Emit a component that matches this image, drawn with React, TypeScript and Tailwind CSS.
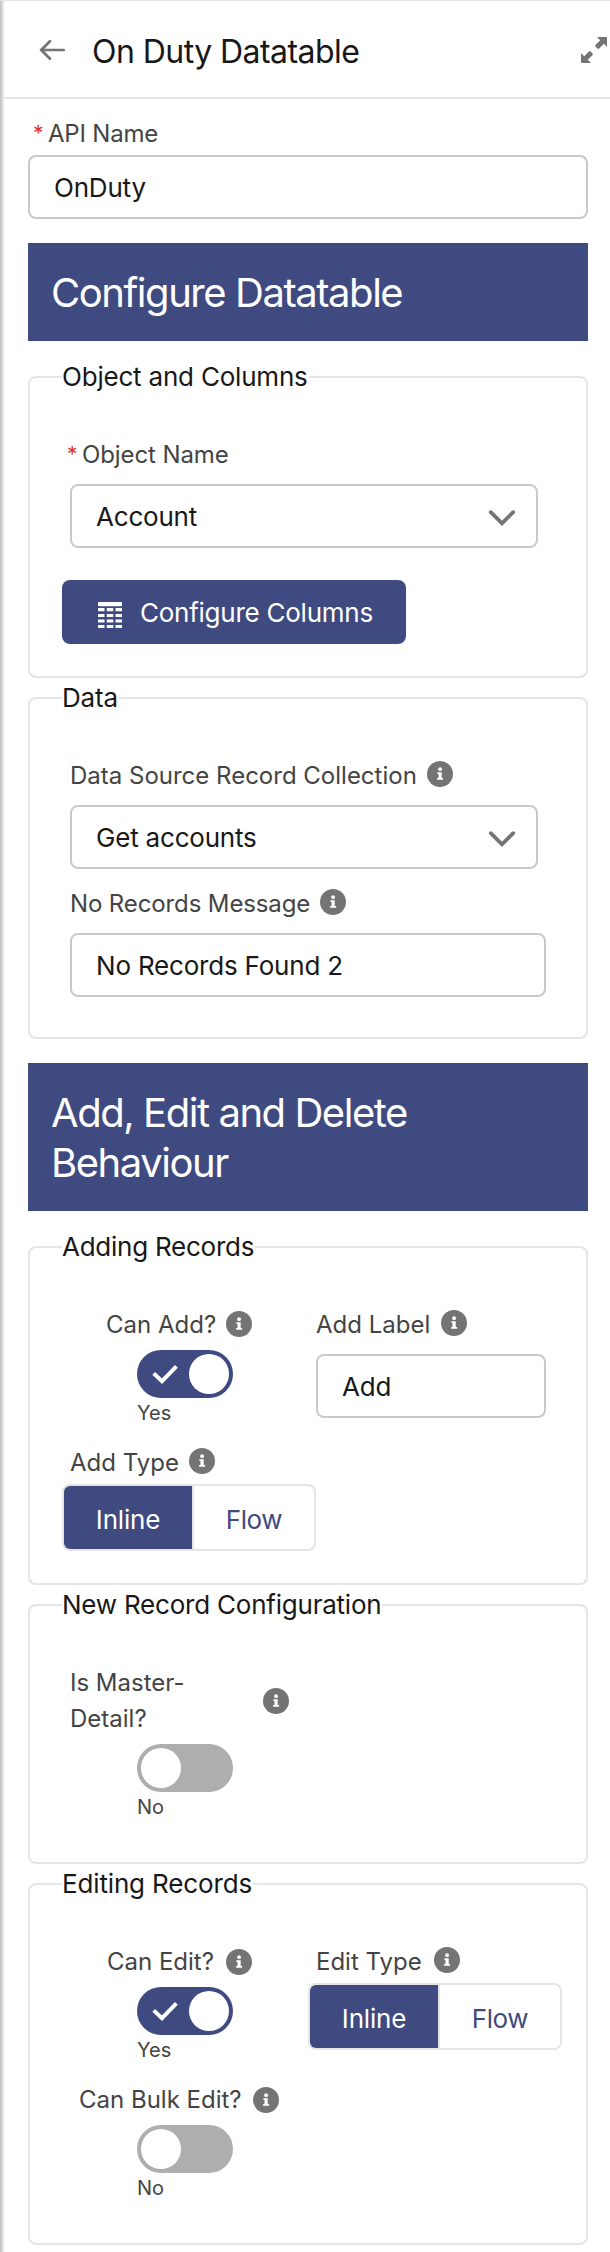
import React from "react";

function Info({ className = "" }: { className?: string }) {
  return (
    <svg viewBox="0 0 26 26" className={"h-[26px] w-[26px] shrink-0 " + className}>
      <circle cx="13" cy="13" r="13" fill="#747474" />
      <circle cx="13.1" cy="8.2" r="1.9" fill="#fff" />
      <path d="M10.4 11.3h4.3v5.6h1.4v1.9h-6v-1.9h1.4v-3.8h-1.1z" fill="#fff" />
    </svg>
  );
}

function Label({ children, className = "" }: { children: React.ReactNode; className?: string }) {
  return <span className={"mt-px -mb-px whitespace-nowrap text-[24px] leading-[36px] text-[#444] " + className}>{children}</span>;
}

function Toggle({ on }: { on: boolean }) {
  return (
    <div className="flex w-24 flex-col">
      <div className={"flex h-12 items-center rounded-full p-1 " + (on ? "justify-between bg-[#3f4a80]" : "bg-[#aeaeae]")}>
        {on && (
          <svg viewBox="0 0 26 20" className="ml-[11px] h-5 w-[26px]" fill="none" stroke="#fff" strokeWidth="4">
            <path d="M1.7 9.4 10 17.2 24.4 2.4" />
          </svg>
        )}
        <div className="h-10 w-10 rounded-full bg-white" />
      </div>
      <span className="mt-[3px] text-[20px] leading-[24px] text-[#444]">{on ? "Yes" : "No"}</span>
    </div>
  );
}

function Segmented() {
  return (
    <div className="flex h-[67px] w-[254px] overflow-hidden rounded-lg border-2 border-[#e5e5e5] text-[26px] leading-[68px]">
      <div className="w-[130px] border-r-2 border-[#e5e5e5] bg-[#3f4a80] text-center tracking-[-0.2px] text-white">Inline</div>
      <div className="flex-1 text-center tracking-[-0.4px] text-[#3f4a80]">Flow</div>
    </div>
  );
}

function Field({ children, className = "" }: { children: React.ReactNode; className?: string }) {
  return (
    <div className={"flex h-16 items-center justify-between rounded-lg border-2 border-[#c9c9c9] pl-6 text-[26px] tracking-[-0.2px] text-[#181818] " + className}>
      {children}
    </div>
  );
}

function Chevron() {
  return (
    <svg viewBox="0 0 28 18" className="mt-1 mr-5 h-[18px] w-7" fill="none" stroke="#747474" strokeWidth="3.8" strokeLinecap="round">
      <path d="M2.8 3.2 14 14.4 25.2 3.2" />
    </svg>
  );
}

function Group({ title, track, className = "", children }: { title: string; track: string; className?: string; children: React.ReactNode }) {
  return (
    <section className={"rounded-lg border-2 border-[#e5e5e5] " + className}>
      <div className="-mt-5 ml-8 flex h-[39px] items-start">
        <h2 className={"whitespace-nowrap bg-white pr-px text-[26px] leading-[37px] text-[#181818] " + track}>{title}</h2>
      </div>
      {children}
    </section>
  );
}

export default function App() {
  return (
    <div className="flex h-[2252px] w-[610px] overflow-hidden border-t border-[#e5e5e5] bg-white font-['Inter',sans-serif]">
      <div className="w-1 shrink-0 border-r-2 border-[#e5e5e5] bg-[#c9c9c9]" />
      <div className="flex w-[606px] shrink-0 flex-col">
        <header className="flex h-[98px] shrink-0 items-center border-b-2 border-[#e5e5e5] pl-[35px]">
          <svg viewBox="0 0 26 22" className="mt-[2px] h-[22px] w-[26px]" fill="none" stroke="#747474" strokeWidth="2.7" strokeLinecap="round" strokeLinejoin="round">
            <path d="M24.7 11H2M11 2.2 2.2 11l8.8 8.8" />
          </svg>
          <h1 className="mt-[5px] ml-[27px] text-[32px] leading-10 tracking-[-0.55px] text-[#181818]">On Duty Datatable</h1>
          <svg viewBox="0 0 26 26" className="mt-[2px] mr-[3px] ml-auto h-[26px] w-[26px]" fill="#747474">
            <path d="M16 0h9q1 0 1 1v9l-3.2-3.2-4.6 4.6q-1 .8-1.9 0l-1.7-1.7q-.8-1 0-1.9l4.6-4.6z" />
            <path transform="rotate(180 13 13)" d="M16 0h9q1 0 1 1v9l-3.2-3.2-4.6 4.6q-1 .8-1.9 0l-1.7-1.7q-.8-1 0-1.9l4.6-4.6z" />
          </svg>
        </header>

        <main className="flex flex-col pl-6">
          <div className="mt-4 flex pl-[5px]">
            <span className="w-[15px] text-[21px] leading-[38px] text-[#e52d1f]">*</span>
            <Label className="tracking-[-0.2px]">API Name</Label>
          </div>
          <Field className="mt-[2px] w-[560px]">OnDuty</Field>
          <div className="mt-6 w-[560px] bg-[#3f4a80] px-[23px] pt-[25px] pb-[23px] text-[40px] leading-[50px] tracking-[-1.45px] text-white">Configure Datatable</div>

          <Group title="Object and Columns" track="tracking-[-0.2px]" className="mt-[35px] h-[302px] w-[560px]">
            <div className="mt-[39px] flex h-9 pl-[37px]">
              <span className="w-[15px] text-[21px] leading-[38px] text-[#e52d1f]">*</span>
              <Label className="tracking-[-0.1px]">Object Name</Label>
            </div>
            <Field className="mt-3 ml-10 w-[468px]">Account<Chevron /></Field>
            <div className="mt-8 ml-8 flex h-16 w-[344px] items-center rounded-lg bg-[#3f4a80] pl-9 text-white">
              <svg viewBox="0 0 24 26" className="mt-[6px] h-[26px] w-6" fill="#fff">
                <rect width="24" height="4.3" rx="1" />
                <path d="M0 6h6.5v3.2H0zM8.8 6h6.5v3.2H8.8zM17.5 6H24v3.2h-6.5zM0 12h6.5v3H0zM8.8 12h6.5v3H8.8zM17.5 12H24v3h-6.5zM0 17.5h6.5v3H0zM8.8 17.5h6.5v3H8.8zM17.5 17.5H24v3h-6.5zM0 23h6.5v3H0zM8.8 23h6.5v3H8.8zM17.5 23H24v3h-6.5z" />
              </svg>
              <span className="ml-[18px] whitespace-nowrap text-[26px] tracking-[-0.25px]">Configure Columns</span>
            </div>
          </Group>

          <Group title="Data" track="tracking-[-0.2px]" className="mt-[19px] h-[342px] w-[560px]">
            <div className="mt-[39px] flex pl-10">
              <Label>Data Source Record Collection</Label>
              <Info className="ml-[10px] mt-[4px]" />
            </div>
            <Field className="mt-3 ml-10 w-[468px]">Get accounts<Chevron /></Field>
            <div className="mt-4 flex pl-10">
              <Label className="tracking-[-0.12px]">No Records Message</Label>
              <Info className="ml-[10px] mt-[4px]" />
            </div>
            <Field className="mt-3 ml-10 w-[476px]">No Records Found 2</Field>
          </Group>

          <div className="mt-6 w-[560px] bg-[#3f4a80] px-[23px] pt-[25px] pb-[23px] text-[40px] leading-[50px] tracking-[-1.45px] text-white">Add, Edit and Delete<br />Behaviour</div>

          <Group title="Adding Records" track="tracking-[-0.25px]" className="mt-[35px] h-[339px] w-[560px]">
            <div className="mt-[39px] flex">
              <div className="flex w-[286px] flex-col">
                <div className="flex pl-[76px]">
                  <Label>Can Add?</Label>
                  <Info className="ml-[10px] mt-[5px]" />
                </div>
                <div className="mt-[8px] ml-[107px]"><Toggle on /></div>
              </div>
              <div className="flex flex-col">
                <div className="flex"><Label>Add Label</Label><Info className="ml-[11px] mt-[4px]" /></div>
                <Field className="mt-3 w-[230px]">Add</Field>
              </div>
            </div>
            <div className="mt-[19px] flex pl-10">
              <Label>Add Type</Label><Info className="ml-[10px] mt-[4px]" />
            </div>
            <div className="mt-1 ml-8"><Segmented /></div>
          </Group>

          <Group title="New Record Configuration" track="tracking-[-0.22px]" className="mt-[19px] h-[260px] w-[560px]">
            <div className="mt-[39px] flex items-center pl-10">
              <Label className="w-[193px]">Is Master-<br />Detail?</Label>
              <Info className="mt-[2px]" />
            </div>
            <div className="mt-[8px] ml-[107px]"><Toggle on={false} /></div>
          </Group>

          <Group title="Editing Records" track="tracking-[-0.15px]" className="mt-[19px] h-[362px] w-[560px]">
            <div className="mt-[39px] flex">
              <div className="flex w-[278px] flex-col">
                <div className="flex pl-[77px]">
                  <Label>Can Edit?</Label><Info className="ml-[12px] mt-[6px]" />
                </div>
                <div className="mt-[8px] ml-[107px]"><Toggle on /></div>
              </div>
              <div className="flex flex-col">
                <div className="flex pl-2"><Label>Edit Type</Label><Info className="ml-[12px] mt-[4px]" /></div>
                <div className="mt-1"><Segmented /></div>
              </div>
            </div>
            <div className="mt-[19px] flex pl-[49px]">
              <Label>Can Bulk Edit?</Label><Info className="ml-[11px] mt-[6px]" />
            </div>
            <div className="mt-[8px] ml-[107px]"><Toggle on={false} /></div>
          </Group>
        </main>
      </div>
    </div>
  );
}
